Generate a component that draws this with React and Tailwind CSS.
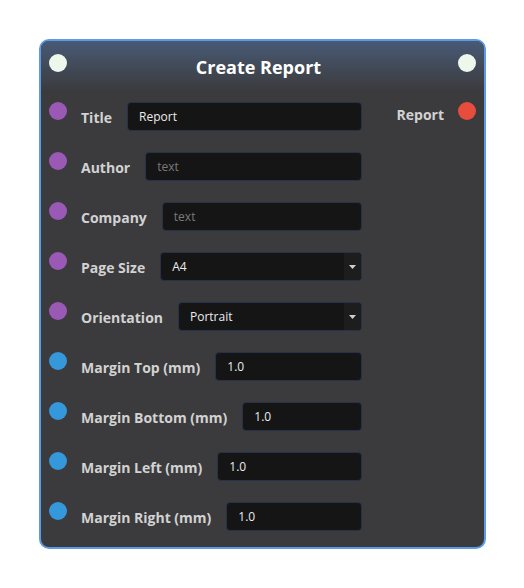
const inputs = [
  { label: "Title", value: "Report", dot: "bg-[#9b59b6]" },
  { label: "Author", placeholder: "text", dot: "bg-[#9b59b6]" },
  { label: "Company", placeholder: "text", dot: "bg-[#9b59b6]" },
  { label: "Page Size", value: "A4", select: true, dot: "bg-[#9b59b6]" },
  { label: "Orientation", value: "Portrait", select: true, dot: "bg-[#9b59b6]" },
  { label: "Margin Top (mm)", value: "1.0", dot: "bg-[#3498db]" },
  { label: "Margin Bottom (mm)", value: "1.0", dot: "bg-[#3498db]" },
  { label: "Margin Left (mm)", value: "1.0", dot: "bg-[#3498db]" },
  { label: "Margin Right (mm)", value: "1.0", dot: "bg-[#3498db]" },
];

function Field({ item }) {
  return (
    <div className="flex h-[29px] flex-1 items-center rounded-[4px] border border-[#25324a] bg-[#151515] text-[12px]">
      <span className={`flex-1 pl-[11px] pt-[1px] ${item.value ? "text-[#ececec]" : "text-[#7a7a7a]"}`}>
        {item.value || item.placeholder}
      </span>
      {item.select && (
        <span className="flex h-full w-[17px] items-center justify-center rounded-r-[4px] bg-[#1d1d1d]">
          <svg width="7" height="4" viewBox="0 0 7 4">
            <path d="M0 0h7L3.5 4z" fill="#cfcfcf" />
          </svg>
        </span>
      )}
    </div>
  );
}

export default function App() {
  return (
    <div className="min-h-[588px] bg-white pl-[39px] pt-[39px]" style={{ fontFamily: '"Open Sans", sans-serif' }}>
      <div className="flex h-[510px] w-[447px] flex-col overflow-hidden rounded-[10px] border-2 border-[#5b9be8] bg-[#3b3b3d]">
        <div className="flex h-[50px] items-start justify-between bg-gradient-to-b from-[#485a76] to-[#3b3b3d] px-[8px] pt-[13px]">
          <span className="h-[18px] w-[18px] rounded-full bg-[#eef7ec]" />
          <span className="mt-[1px] pr-[8px] text-[18px] font-bold leading-[24px] text-white">Create Report</span>
          <span className="h-[18px] w-[18px] rounded-full bg-[#eef7ec]" />
        </div>
        <div className="mt-[11px] flex px-[8px]">
          <div className="flex w-[313px] flex-col gap-[21px]">
            {inputs.map((item) => (
              <div key={item.label} className="flex h-[29px] items-start">
                <span className={`h-[18px] w-[18px] shrink-0 rounded-full ${item.dot}`} />
                <span className="ml-[14px] mr-[15px] mt-[7px] whitespace-nowrap text-[14px] font-bold leading-[18px] text-[#d2d2d2]">
                  {item.label}
                </span>
                <Field item={item} />
              </div>
            ))}
          </div>
          <div className="ml-auto flex h-[29px] items-start">
            <span className="mt-[4px] text-[14px] font-bold leading-[18px] text-[#d2d2d2]">Report</span>
            <span className="ml-[14px] h-[18px] w-[18px] rounded-full bg-[#e74c3c]" />
          </div>
        </div>
      </div>
    </div>
  );
}
